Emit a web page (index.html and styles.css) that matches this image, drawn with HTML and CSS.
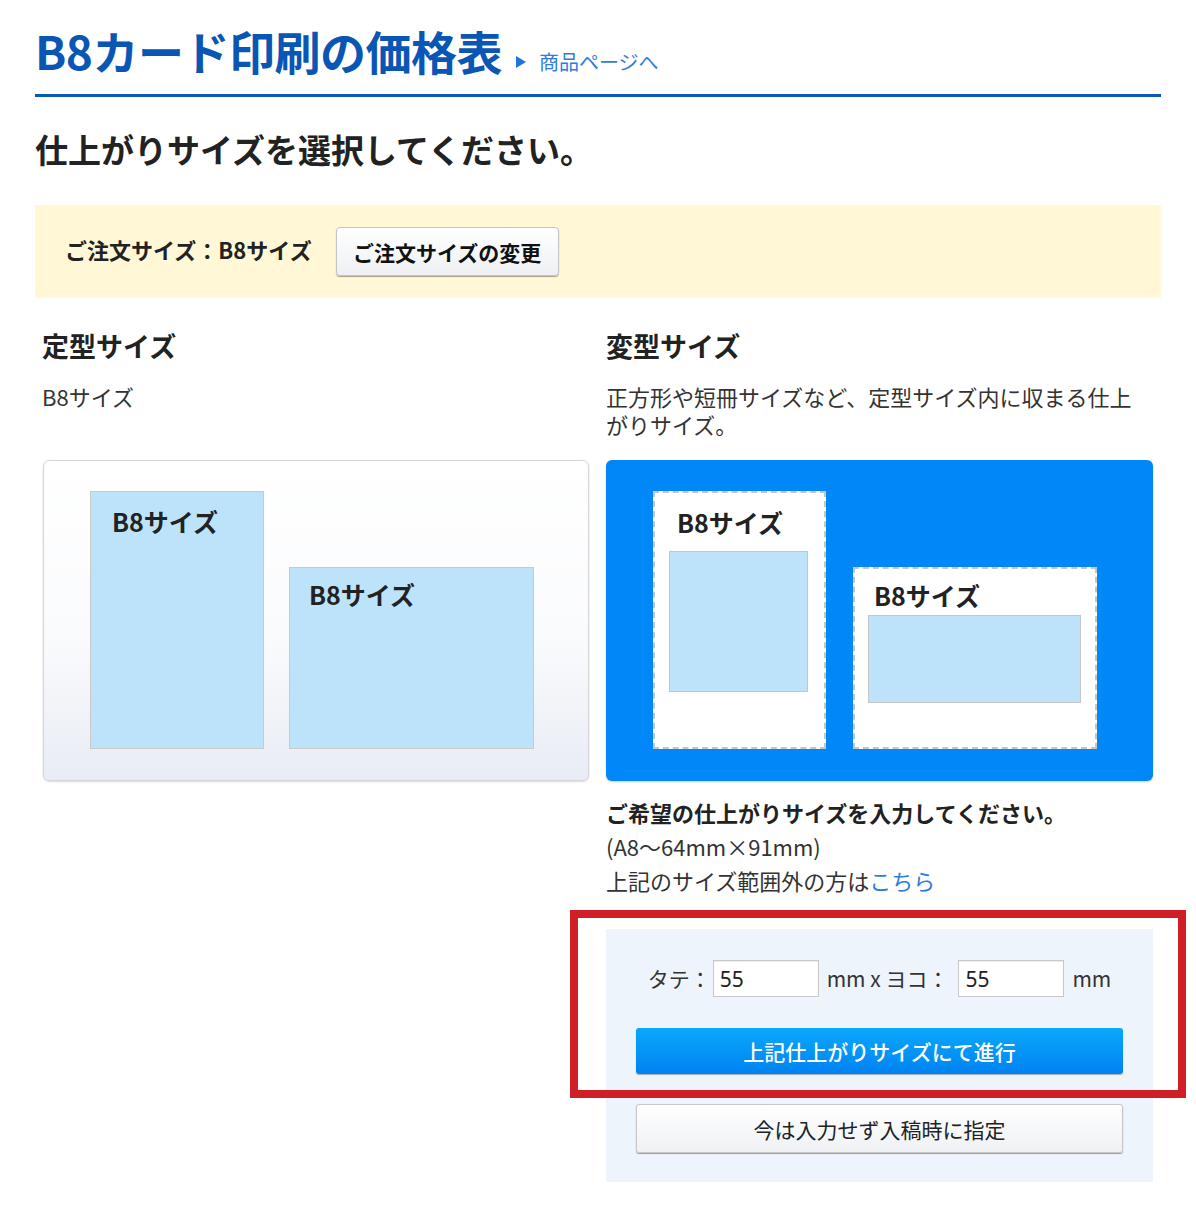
FILE: index.html
```html
<!DOCTYPE html>
<html lang="ja">
<head>
<meta charset="utf-8">
<title>B8カード印刷の価格表</title>
<link rel="stylesheet" href="styles.css">
</head>
<body>
<div class="page">
  <div class="header">
    <h1 class="title">B8カード印刷の価格表</h1>
    <a class="product-link" href="#"><span class="tri"></span>商品ページへ</a>
  </div>

  <h2 class="lead">仕上がりサイズを選択してください。</h2>

  <div class="order-bar">
    <span class="order-label">ご注文サイズ：B8サイズ</span>
    <button class="btn-change" type="button">ご注文サイズの変更</button>
  </div>

  <div class="columns">
    <div class="col">
      <h3 class="col-title">定型サイズ</h3>
      <p class="col-desc">B8サイズ</p>
      <div class="card card-std">
        <div class="sheet sheet-tall"><span class="sheet-label">B8サイズ</span></div>
        <div class="sheet sheet-wide"><span class="sheet-label">B8サイズ</span></div>
      </div>
    </div>
    <div class="col">
      <h3 class="col-title">変型サイズ</h3>
      <p class="col-desc">正方形や短冊サイズなど、定型サイズ内に収まる仕上がりサイズ。</p>
      <div class="card card-custom">
        <div class="frame frame-tall">
          <span class="frame-label">B8サイズ</span>
          <div class="inner inner-tall"></div>
        </div>
        <div class="frame frame-wide">
          <span class="frame-label">B8サイズ</span>
          <div class="inner inner-wide"></div>
        </div>
      </div>

      <p class="custom-lead">ご希望の仕上がりサイズを入力してください。</p>
      <p class="custom-note">(A8〜64mm×91mm)</p>
      <p class="custom-note">上記のサイズ範囲外の方は<a href="#" class="here">こちら</a></p>

      <div class="form-wrap">
        <div class="form-box">
          <div class="size-row">
            <span class="lbl">タテ：</span>
            <input class="size-input" type="text" value="55">
            <span class="lbl unit">mm x ヨコ：</span>
            <input class="size-input" type="text" value="55">
            <span class="lbl unit">mm</span>
          </div>
          <button class="btn-go" type="button">上記仕上がりサイズにて進行</button>
          <button class="btn-later" type="button">今は入力せず入稿時に指定</button>
        </div>
        <div class="highlight"></div>
      </div>
    </div>
  </div>
</div>
</body>
</html>
```

FILE: styles.css
```css
* { box-sizing: border-box; }
html, body { margin: 0; padding: 0; background: #fff; }
body {
  font-family: "Noto Sans CJK JP", "Noto Sans", sans-serif;
  color: #222;
}
.page {
  width: 1126px;
  margin-left: 35px;
}
.header {
  display: flex;
  align-items: flex-end;
  padding-top: 20px;
  height: 97px;
  border-bottom: 3px solid #0a58b7;
}
.title {
  margin: 0 0 13px;
  font-size: 46px;
  line-height: 62px;
  font-weight: 700;
  color: #0a56b4;
  letter-spacing: -0.5px;
}
.product-link {
  display: inline-flex;
  align-items: center;
  margin-left: 14px;
  margin-bottom: 18px;
  font-size: 20px;
  line-height: 28px;
  color: #2f7ce0;
  text-decoration: none;
}
.tri {
  display: inline-block;
  width: 0;
  height: 0;
  border-left: 10px solid #1d74dc;
  border-top: 6px solid transparent;
  border-bottom: 6px solid transparent;
  margin-right: 13px;
}
.lead {
  margin: 28px 0 0;
  font-size: 33px;
  line-height: 48px;
  font-weight: 700;
  color: #222;
}
.order-bar {
  margin-top: 32px;
  height: 93px;
  background: #fff7d5;
  display: flex;
  align-items: center;
  padding-left: 30px;
}
.order-label {
  font-size: 22px;
  font-weight: 700;
  color: #222;
  margin-bottom: 6px;
}
.btn-change {
  margin-left: 24px;
  height: 49px;
  width: 223px;
  font-family: inherit;
  font-size: 21px;
  font-weight: 700;
  color: #111;
  border: 1px solid #c4c4c4;
  border-radius: 4px;
  background: linear-gradient(#ffffff, #eef0f3);
  box-shadow: 0 1px 1px rgba(0,0,0,0.35);
}
.columns {
  display: grid;
  grid-template-columns: 547px 547px;
  column-gap: 17px;
  margin: 0 8px 0 7px;
  padding-top: 28px;
}
.col-title {
  margin: 0;
  font-size: 27px;
  line-height: 40px;
  font-weight: 700;
  color: #222;
}
.col-desc {
  margin: 16px 0 0;
  font-size: 22px;
  line-height: 28px;
  color: #333;
  height: 78px;
}
.card {
  width: 547px;
  height: 321px;
  border-radius: 6px;
  display: flex;
  align-items: flex-end;
  padding: 31px 0 32px 47px;
}
.card-std {
  margin-left: 1px;
  width: 546px;
  border: 1px solid #d6d6d6;
  background: linear-gradient(#ffffff 0%, #fafbfd 55%, #e8ecf4 100%);
  box-shadow: 0 1px 2px rgba(0,0,0,0.15);
  padding: 30px 0 31px 46px;
}
.sheet {
  background: #bde3fb;
  border: 1px solid #c9c9c9;
  padding: 17px 0 0 21px;
}
.sheet-tall { width: 174px; height: 258px; }
.sheet-wide { width: 245px; height: 182px; margin-left: 25px; padding: 14px 0 0 19px; }
.sheet-label, .frame-label {
  font-size: 25px;
  font-weight: 700;
  line-height: 25px;
  color: #222;
}
.card-custom {
  background: #0088f9;
  box-shadow: 0 1px 2px rgba(0,0,0,0.2);
}
.frame {
  background: #fff;
  border: 2px dashed #c6c6c6;
  display: flex;
  flex-direction: column;
}
.frame-tall { width: 173px; height: 258px; padding: 17px 0 0 14px; }
.frame-wide { width: 244px; height: 182px; margin-left: 27px; padding: 14px 0 0 13px; }
.frame-tall .frame-label { margin-left: 8px; }
.frame-wide .frame-label { margin-left: 6px; }
.inner {
  background: #bde3fb;
  border: 1px solid #c6c6c6;
}
.inner-tall { width: 139px; height: 141px; margin-top: 16px; }
.inner-wide { width: 213px; height: 88px; margin-top: 7px; }
.custom-lead {
  margin: 14px 0 0;
  font-size: 22px;
  font-weight: 700;
  line-height: 34px;
  color: #222;
}
.custom-note {
  margin: 0;
  font-size: 22px;
  line-height: 34px;
  color: #333;
}
.here { color: #2c7de2; text-decoration: none; }
.form-wrap {
  position: relative;
  margin-top: 32px;
}
.form-box {
  background: #eef4fc;
  height: 253px;
  padding: 31px 30px 0;
  display: flex;
  flex-direction: column;
  align-items: stretch;
}
.size-row {
  display: flex;
  align-items: center;
  justify-content: center;
  height: 37px;
  font-size: 21px;
  color: #333;
}
.lbl { line-height: 37px; }
.unit { margin-left: 8px; margin-right: 8px; }
.size-row .unit:last-child { margin-right: 0; }
.size-input {
  width: 106px;
  height: 37px;
  border: 1px solid #c8c8c8;
  box-shadow: inset 0 1px 1px rgba(0,0,0,0.08);
  background: #fff;
  font-family: "Noto Sans", sans-serif;
  font-size: 21px;
  color: #222;
  padding: 0 6px;
  margin-left: 2px;
}
.btn-go {
  margin-top: 31px;
  height: 46px;
  border: none;
  border-radius: 3px;
  background: linear-gradient(#0aa8fb, #0082f2);
  box-shadow: 0 1px 1px rgba(0,0,0,0.3);
  color: #fff;
  font-family: inherit;
  font-size: 21px;
  font-weight: 500;
}
.btn-later {
  margin-top: 30px;
  height: 49px;
  border: 1px solid #c6c6c6;
  border-radius: 3px;
  background: linear-gradient(#ffffff, #eff1f4);
  box-shadow: 0 1px 1px rgba(0,0,0,0.35);
  color: #222;
  font-family: inherit;
  font-size: 21px;
}
.highlight {
  position: absolute;
  left: -36px;
  top: -19px;
  width: 616px;
  height: 188px;
  border: 8px solid #d01e27;
  pointer-events: none;
}
```
